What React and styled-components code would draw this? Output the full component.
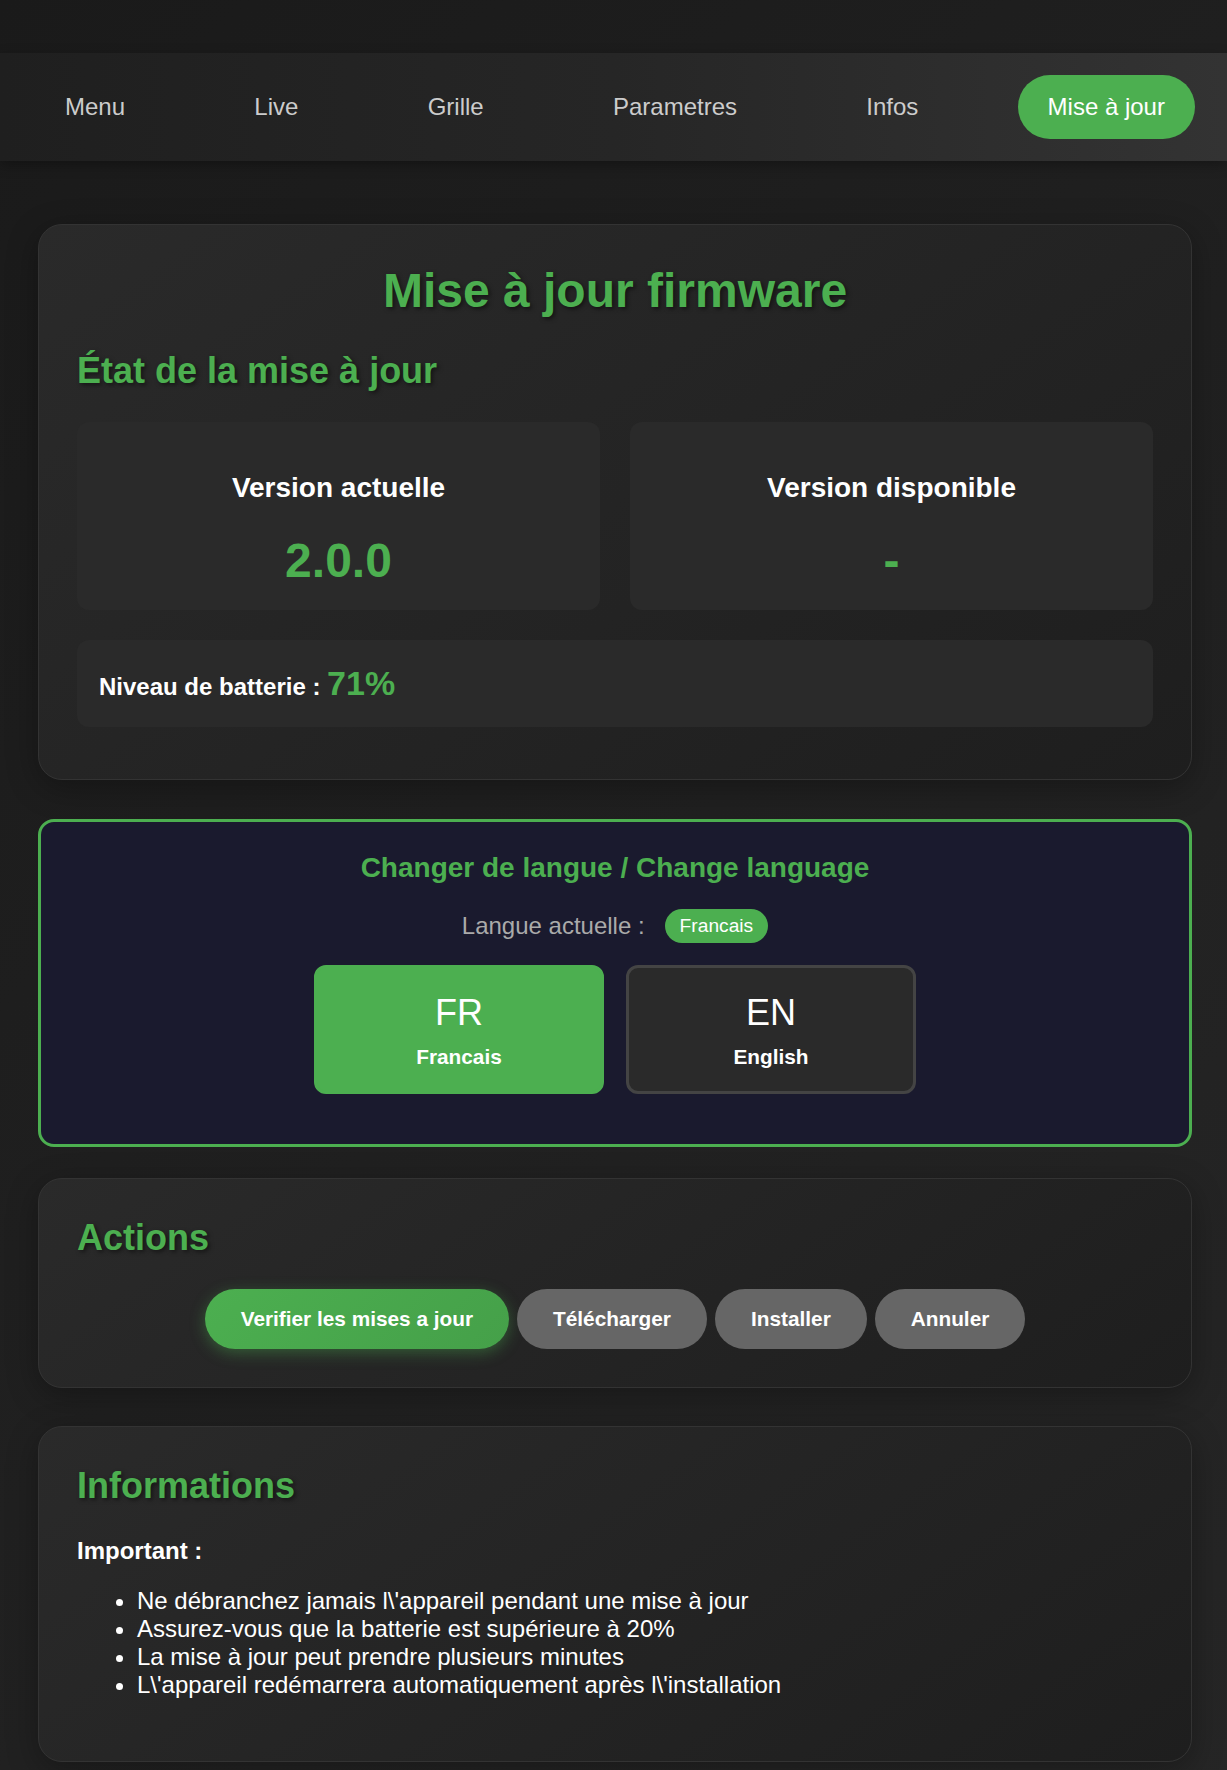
import React from "react";
import styled, { createGlobalStyle } from "styled-components";

const green = "#4caf50";

const GlobalStyle = createGlobalStyle`
  * {
    box-sizing: border-box;
  }
  body {
    margin: 0;
    background: linear-gradient(135deg, #1a1a1a 0%, #262626 100%);
    color: #fff;
    font-family: "Liberation Sans", Arial, sans-serif;
    min-height: 100vh;
  }
`;

const NAV_ITEMS = ["Menu", "Live", "Grille", "Parametres", "Infos", "Mise à jour"];

const NOTES = [
  "Ne débranchez jamais l\\'appareil pendant une mise à jour",
  "Assurez-vous que la batterie est supérieure à 20%",
  "La mise à jour peut prendre plusieurs minutes",
  "L\\'appareil redémarrera automatiquement après l\\'installation",
];

export default function App() {
  return (
    <Page>
      <GlobalStyle />
      <Nav>
        {NAV_ITEMS.map((item) => (
          <NavLink key={item} $active={item === "Mise à jour"}>
            {item}
          </NavLink>
        ))}
      </Nav>

      <Main>
        <Card>
          <PageTitle>Mise à jour firmware</PageTitle>
          <SectionTitle>État de la mise à jour</SectionTitle>
          <VersionGrid>
            <VersionCard>
              <VersionLabel>Version actuelle</VersionLabel>
              <VersionValue>2.0.0</VersionValue>
            </VersionCard>
            <VersionCard>
              <VersionLabel>Version disponible</VersionLabel>
              <VersionValue>-</VersionValue>
            </VersionCard>
          </VersionGrid>
          <BatteryBox>
            Niveau de batterie : <BatteryValue>71%</BatteryValue>
          </BatteryBox>
        </Card>

        <LangSection>
          <LangTitle>Changer de langue / Change language</LangTitle>
          <LangCurrent>
            <span>Langue actuelle :</span>
            <LangPill>Francais</LangPill>
          </LangCurrent>
          <LangButtons>
            <LangButton $active>
              <span className="code">FR</span>
              <span className="name">Francais</span>
            </LangButton>
            <LangButton>
              <span className="code">EN</span>
              <span className="name">English</span>
            </LangButton>
          </LangButtons>
        </LangSection>

        <Card>
          <SectionTitle>Actions</SectionTitle>
          <ActionRow>
            <ActionButton $primary>Verifier les mises a jour</ActionButton>
            <ActionButton>Télécharger</ActionButton>
            <ActionButton>Installer</ActionButton>
            <ActionButton>Annuler</ActionButton>
          </ActionRow>
        </Card>

        <Card>
          <SectionTitle>Informations</SectionTitle>
          <Important>Important :</Important>
          <NoteList>
            {NOTES.map((note) => (
              <li key={note}>{note}</li>
            ))}
          </NoteList>
        </Card>
      </Main>
    </Page>
  );
}

const Page = styled.div`
  padding-top: 53px;
`;

const Nav = styled.nav`
  display: flex;
  justify-content: space-between;
  align-items: center;
  padding: 22px 32px 22px 35px;
  background: linear-gradient(90deg, #1f1f1f 0%, #262626 50%, #333333 100%);
  box-shadow: 0 4px 12px rgba(0, 0, 0, 0.3);
`;

const NavLink = styled.a`
  padding: 18px 30px;
  border-radius: 32px;
  font-size: 24px;
  color: ${({ $active }) => ($active ? "#fff" : "#cccccc")};
  background: ${({ $active }) => ($active ? green : "transparent")};
  cursor: pointer;
`;

const Main = styled.main`
  padding: 63px 35px 20px 38px;
`;

const Card = styled.section`
  background: linear-gradient(145deg, #2a2a2a 0%, #1e1e1e 100%);
  border: 1px solid #333;
  border-radius: 24px;
  padding: 38px;
  margin-bottom: 38px;
  box-shadow: 0 8px 32px rgba(0, 0, 0, 0.3);
`;

const PageTitle = styled.h1`
  margin: 0 0 32px;
  font-size: 48px;
  font-weight: bold;
  color: ${green};
  text-align: center;
  text-shadow: 2px 2px 4px rgba(0, 0, 0, 0.5);
`;

const SectionTitle = styled.h2`
  margin: 0 0 30px;
  font-size: 36px;
  font-weight: bold;
  color: ${green};
  text-shadow: 2px 2px 4px rgba(0, 0, 0, 0.5);
`;

const VersionGrid = styled.div`
  display: grid;
  grid-template-columns: 1fr 1fr;
  gap: 30px;
  margin-bottom: 30px;
`;

const VersionCard = styled.div`
  background: #2a2a2a;
  border-radius: 12px;
  padding: 50px 20px 22px;
  text-align: center;
`;

const VersionLabel = styled.h3`
  margin: 0 0 29px;
  font-size: 28px;
  font-weight: bold;
  color: #fff;
`;

const VersionValue = styled.div`
  font-size: 48px;
  font-weight: bold;
  color: ${green};
`;

const BatteryBox = styled.div`
  background: #2a2a2a;
  border-radius: 12px;
  padding: 24px 22px;
  margin-bottom: 14px;
  font-size: 24px;
  font-weight: bold;
  color: #fff;
`;

const BatteryValue = styled.span`
  font-size: 34px;
  color: ${green};
`;

const LangSection = styled.section`
  background: #1a1a2e;
  border: 3px solid ${green};
  border-radius: 16px;
  padding: 30px 30px 50px;
  margin: 39px 0 31px;
  text-align: center;
`;

const LangTitle = styled.h3`
  margin: 0 0 25px;
  font-size: 28px;
  font-weight: bold;
  color: ${green};
`;

const LangCurrent = styled.div`
  display: flex;
  justify-content: center;
  align-items: center;
  gap: 20px;
  margin-bottom: 22px;
  font-size: 24px;
  color: #aaaaaa;
`;

const LangPill = styled.span`
  padding: 6px 15px;
  border-radius: 20px;
  background: ${green};
  color: #fff;
  font-size: 19.2px;
`;

const LangButtons = styled.div`
  display: flex;
  justify-content: center;
  gap: 22px;
`;

const LangButton = styled.button`
  width: 290px;
  height: 129px;
  display: flex;
  flex-direction: column;
  align-items: center;
  gap: 11px;
  padding: 24px 0 0;
  border-radius: 12px;
  border: 3px solid ${({ $active }) => ($active ? green : "#444")};
  background: ${({ $active }) => ($active ? green : "#2a2a2a")};
  color: #fff;
  font-family: inherit;
  cursor: pointer;
  .code {
    font-size: 36px;
  }
  .name {
    font-size: 20.8px;
    font-weight: bold;
  }
`;

const ActionRow = styled.div`
  display: flex;
  justify-content: center;
  flex-wrap: wrap;
  gap: 8px;
`;

const ActionButton = styled.button`
  padding: 18px 36px;
  border: none;
  border-radius: 30px;
  font-family: inherit;
  font-size: 20.8px;
  font-weight: bold;
  color: #fff;
  background: ${({ $primary }) =>
    $primary ? `linear-gradient(135deg, ${green} 0%, #45a049 100%)` : "#666"};
  box-shadow: ${({ $primary }) =>
    $primary ? "0 4px 15px rgba(76, 175, 80, 0.4)" : "none"};
  cursor: pointer;
`;

const Important = styled.p`
  margin: 0;
  font-size: 24px;
  font-weight: bold;
  color: #fff;
`;

const NoteList = styled.ul`
  margin: 22px 0 24px;
  padding-left: 60px;
  font-size: 24px;
  color: #fff;
`;
